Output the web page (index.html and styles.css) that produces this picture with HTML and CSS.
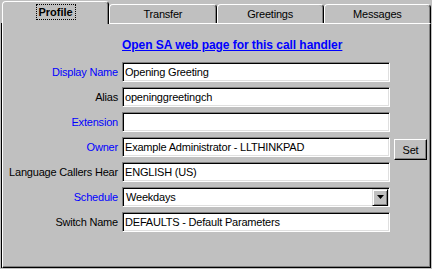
FILE: index.html
```html
<!DOCTYPE html>
<html lang="en">
<head>
    <meta charset="UTF-8">
    <title>Call Handler - Profile</title>
    <link rel="stylesheet" href="styles.css">
</head>
<body>
    <div class="dlg">
        <div class="tabs">
            <div class="tab tab-active"><span class="focus">Profile</span></div>
            <div class="tab">Transfer</div>
            <div class="tab">Greetings</div>
            <div class="tab">Messages</div>
        </div>

        <div class="panel">
            <div class="link-row">
                <a class="sa-link" href="#">Open SA web page for this call handler</a>
            </div>

            <div class="form">
                <label class="lbl blue">Display Name</label>
                <input class="field" type="text" value="Opening Greeting">
                <span></span>

                <label class="lbl">Alias</label>
                <input class="field" type="text" value="openinggreetingch">
                <span></span>

                <label class="lbl blue">Extension</label>
                <input class="field" type="text" value="">
                <span></span>

                <label class="lbl blue">Owner</label>
                <input class="field" type="text" value="Example Administrator - LLTHINKPAD">
                <button class="btn">Set</button>

                <label class="lbl">Language Callers Hear</label>
                <input class="field" type="text" value="ENGLISH (US)">
                <span></span>

                <label class="lbl blue">Schedule</label>
                <div class="combo">
                    <span class="combo-text">Weekdays</span>
                    <span class="combo-arrow">
                        <svg width="7" height="4" viewBox="0 0 7 4"><polygon points="0,0 7,0 3.5,4" fill="#000"/></svg>
                    </span>
                </div>
                <span></span>

                <label class="lbl">Switch Name</label>
                <input class="field" type="text" value="DEFAULTS - Default Parameters">
                <span></span>
            </div>
        </div>
    </div>
</body>
</html>
```

FILE: styles.css
```css
body {
    margin: 0;
    background: #c0c0c0;
    font-family: "Liberation Sans", Arial, sans-serif;
    font-size: 11px;
    letter-spacing: -0.2px;
    color: #000;
}
.dlg {
    width: 431px;
}

/* tab strip */
.tabs {
    display: flex;
    align-items: flex-end;
    height: 23px;
    padding-left: 2px;
    position: relative;
    z-index: 1;
}
.tab {
    flex: 1;
    height: 18px;
    line-height: 18px;
    text-align: center;
    border: 1px solid;
    border-color: #fff #000 transparent #fff;
    border-bottom: none;
    border-radius: 4px 4px 0 0;
    box-shadow: inset -1px 0 #808080;
    background: #c0c0c0;
}
.tab-active {
    height: 22px;
    line-height: 20px;
    margin-bottom: -1px;
    font-weight: bold;
    letter-spacing: 0;
}
.focus {
    outline: 1px dotted #000;
    outline-offset: 0;
    padding: 1px 2px;
}

/* page body */
.panel {
    height: 243px;
    margin-left: 2px;
    border: 1px solid;
    border-color: #fff #000 #000 #fff;
    box-shadow: -1px 0 #000, inset -1px -1px #808080;
}
.link-row {
    padding: 14px 0 0 119px;
    height: 24px;
}
.sa-link {
    color: #0000ff;
    font-weight: bold;
    font-size: 12px;
    letter-spacing: -0.05px;
}
.form {
    display: grid;
    grid-template-columns: 115px 268px 33px;
    grid-auto-rows: 20px;
    column-gap: 4px;
    row-gap: 5px;
}
.lbl {
    align-self: center;
    text-align: right;
    white-space: nowrap;
}
.blue {
    color: #0000ff;
}
.field,
.combo {
    box-sizing: border-box;
    width: 268px;
    height: 20px;
    margin: 0;
    padding: 0 2px;
    font: inherit;
    letter-spacing: inherit;
    color: #000;
    background: #fff;
    border: 1px solid;
    border-color: #808080 #fff #fff #808080;
    box-shadow: inset 1px 1px #000, inset -1px -1px #dfdfdf;
    outline: none;
}
.combo {
    display: flex;
    align-items: center;
    padding: 1px 1px 1px 3px;
}
.combo-text {
    flex: 1;
}
.combo-arrow {
    box-sizing: border-box;
    width: 16px;
    height: 17px;
    display: flex;
    align-items: center;
    justify-content: center;
    background: #c0c0c0;
    border: 1px solid;
    border-color: #dfdfdf #000 #000 #dfdfdf;
    box-shadow: inset 1px 1px #fff, inset -1px -1px #808080;
}
.btn {
    box-sizing: border-box;
    align-self: start;
    margin-top: 2px;
    width: 33px;
    height: 21px;
    padding: 0;
    font: inherit;
    letter-spacing: inherit;
    color: #000;
    background: #c0c0c0;
    border: 1px solid;
    border-color: #fff #000 #000 #fff;
    box-shadow: inset -1px -1px #808080;
}
```
